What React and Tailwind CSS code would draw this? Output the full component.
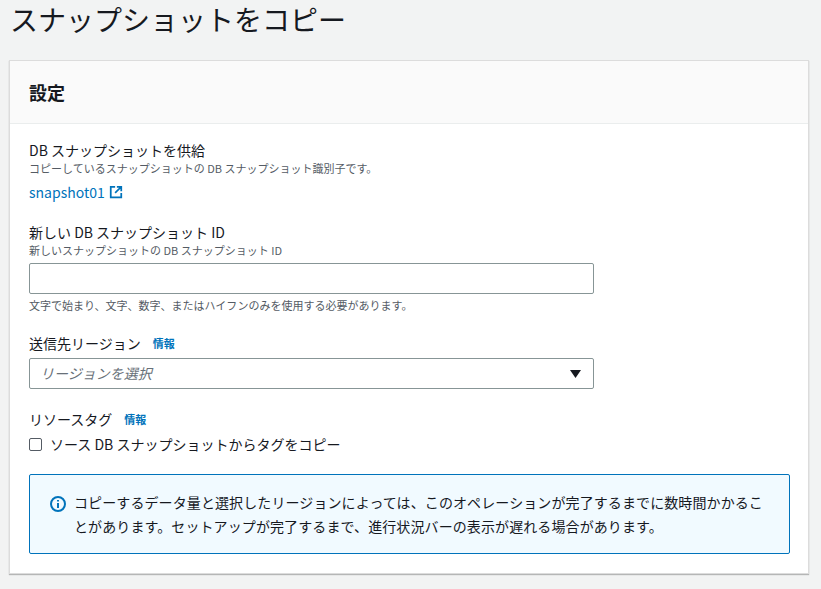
export default function App() {
  const f = { fontFamily: '"Noto Sans CJK JP", "Noto Sans", sans-serif' };
  return (
    <div className="w-[821px] h-[589px] bg-[#f2f3f3] text-[#16191f] overflow-hidden" style={f}>
      <h1 className="text-[28px] leading-[34px] pl-[10px] pt-[2px] h-[60px] font-normal">スナップショットをコピー</h1>
      <div className="ml-[9px] w-[800px] bg-white border border-[#dcdcdc] shadow-[0_1px_1px_rgba(0,0,0,0.25)]">
        <div className="h-[63px] bg-[#fafafa] border-b border-[#eaeded] flex items-center pl-[19px]">
          <span className="text-[18px] font-bold">設定</span>
        </div>
        <div className="px-[19px] pt-[16px] pb-[19px] flex flex-col">
          <div className="text-[14px] leading-[20px]">DB スナップショットを供給</div>
          <div className="text-[11px] leading-[16px] text-[#545b64]">コピーしているスナップショットの DB スナップショット識別子です。</div>
          <div className="mt-[6px] flex items-center gap-[4px] text-[14px] text-[#0073bb] leading-[20px]">
            <span>snapshot01</span>
            <svg width="14" height="14" viewBox="0 0 16 16" fill="none" stroke="#0073bb" strokeWidth="2"><path d="M7 2H2v12h12V9"/><path d="M9 2h5v5M14 2L7 9"/></svg>
          </div>
          <div className="mt-[20px] text-[14px] leading-[20px]">新しい DB スナップショット ID</div>
          <div className="text-[11px] leading-[16px] text-[#545b64]">新しいスナップショットの DB スナップショット ID</div>
          <div className="mt-[5px] w-[565px] h-[31px] border border-[#879596] rounded-[2px] bg-white"></div>
          <div className="mt-[3px] text-[11px] leading-[16px] text-[#545b64]">文字で始まり、文字、数字、またはハイフンのみを使用する必要があります。</div>
          <div className="mt-[20px] text-[14px] leading-[20px] flex items-center gap-[12px]">送信先リージョン<span className="text-[11px] font-bold text-[#0073bb]">情報</span></div>
          <div className="mt-[5px] w-[565px] h-[31px] border border-[#879596] rounded-[2px] bg-white flex items-center justify-between pl-[10px] pr-[12px]">
            <span className="text-[14px] italic text-[#687078]">リージョンを選択</span>
            <svg width="11" height="8" viewBox="0 0 11 8"><path d="M0 0h11L5.5 8z" fill="#16191f"/></svg>
          </div>
          <div className="mt-[20px] text-[14px] leading-[20px] flex items-center gap-[12px]">リソースタグ<span className="text-[11px] font-bold text-[#0073bb]">情報</span></div>
          <div className="mt-[5px] flex items-center gap-[8px] text-[14px] leading-[20px]">
            <div className="w-[13px] h-[13px] border border-[#545b64] rounded-[2px] bg-white"></div>
            ソース DB スナップショットからタグをコピー
          </div>
          <div className="mt-[20px] w-[761px] h-[80px] border border-[#0073bb] bg-[#f1faff] rounded-[2px] flex items-start pl-[20px] pr-[24px] pt-[15px] gap-[8px]">
            <svg className="mt-[6px] shrink-0" width="16" height="16" viewBox="0 0 16 16" fill="none" stroke="#0073bb" strokeWidth="2"><circle cx="8" cy="8" r="7"/><path d="M8 7v5M8 4v1.5"/></svg>
            <div className="text-[14px] leading-[24px] tracking-[0.1px]">コピーするデータ量と選択したリージョンによっては、このオペレーションが完了するまでに数時間かかることがあります。セットアップが完了するまで、進行状況バーの表示が遅れる場合があります。</div>
          </div>
        </div>
      </div>
    </div>
  );
}
